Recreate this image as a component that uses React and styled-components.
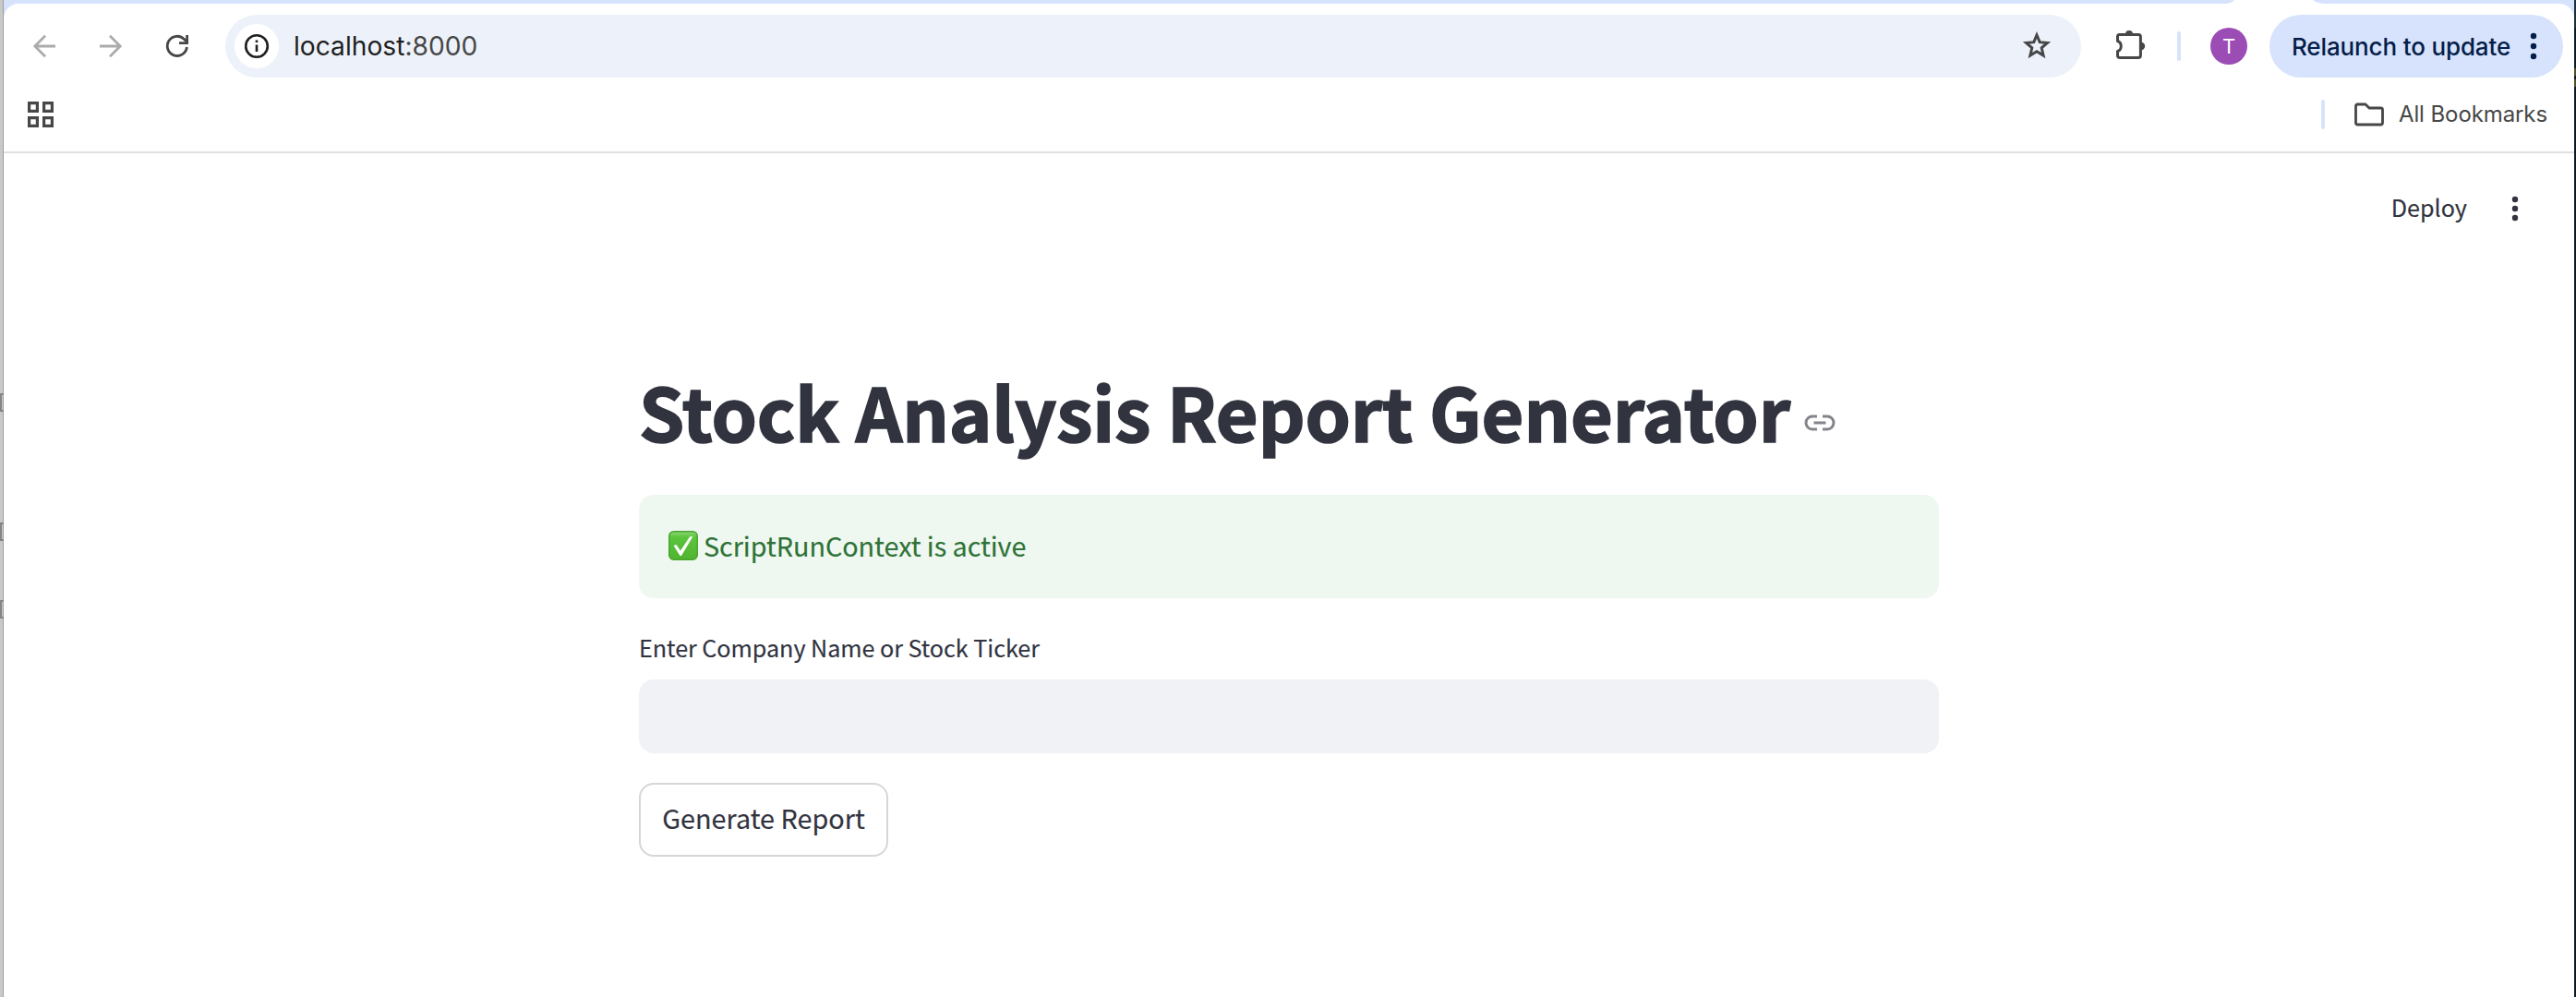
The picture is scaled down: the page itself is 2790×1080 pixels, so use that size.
import React from "react";
import styled, { createGlobalStyle } from "styled-components";

const Global = createGlobalStyle`
  * { box-sizing: border-box; }
  body { margin: 0; background: #fff; overflow: hidden; }
`;
const ui = `Inter, "Liberation Sans", sans-serif`;
const source = `"Noto Sans CJK SC", "Open Sans", sans-serif`;

const Desktop = styled.div`
  display: grid;
  grid-template-columns: 4px 1fr 2px;
  width: 2790px;
  height: 1080px;
  overflow: hidden;
`;
const LeftEdge = styled.div`
  display: flex;
  flex-direction: column;
  background: linear-gradient(90deg, #c9c9c7 0 3px, #9d9d9d 3px);
  padding-top: 426px;
`;
const Bracket = styled.div`
  flex: none;
  height: 20px;
  margin-bottom: ${(p) => p.$after}px;
  border: 2px solid #858585;
  border-right: 0;
`;
const RightEdge = styled.div`
  background: linear-gradient(#1b3039 0 30px, #0b1c24 30px 74px, #4f5128 74px 82px, #0b1c24 82px 86px, #4f5128 86px 94px, #0b1c24 94px);
`;
const Browser = styled.div`
  background: #d7e2fc;
  display: flex;
  flex-direction: column;
`;
const TabStrip = styled.div`
  height: 4px;
  flex: none;
  display: flex;
  justify-content: flex-end;
  padding-right: 271px;
`;
const Chrome = styled.div`
  flex: 1;
  background: #fff;
  border-radius: 16px 16px 0 0;
`;
const Toolbar = styled.div`
  display: flex;
  align-items: center;
  height: 92px;
  padding: 0 12px 0 24px;
`;
const IconSlot = styled.div`
  display: flex;
  align-items: center;
  justify-content: center;
  flex: none;
  width: ${(p) => p.$w}px;
  margin-left: ${(p) => p.$ml || 0}px;
  margin-top: ${(p) => p.$mt || 0}px;
`;
const AddressBar = styled.div`
  flex: none;
  display: flex;
  align-items: center;
  width: 2010px;
  height: 68px;
  margin-left: 32px;
  padding: 0 30px 0 10px;
  border-radius: 34px;
  background: #edf2fa;
`;
const SiteInfo = styled.div`
  display: grid;
  place-items: center;
  width: 48px;
  height: 48px;
  border-radius: 50%;
  background: #fff;
`;
const Url = styled.div`
  flex: 1;
  margin-left: 16px;
  font: 400 28.2px/40px ${ui};
  color: #1f1f1f;
  span { color: #474747; }
`;
const Divider = styled.div`
  width: 4px;
  height: 32px;
  border-radius: 2px;
  background: #d7e2fc;
  margin-left: ${(p) => p.$ml || 0}px;
`;
const Avatar = styled.div`
  width: 40px;
  height: 40px;
  margin-left: 32px;
  border-radius: 50%;
  background: #9c4cb5;
  color: #fff;
  font: 400 22px/41px Roboto, sans-serif;
  text-align: center;
`;
const Relaunch = styled.div`
  display: flex;
  align-items: center;
  justify-content: space-between;
  width: 318px;
  height: 68px;
  margin-left: 24px;
  padding: 0 24px;
  border-radius: 34px;
  background: #d7e2fc;
  color: #041e49;
  font: 500 26px/40px ${ui};
  letter-spacing: -0.14px;
  white-space: nowrap;
`;
const RelaunchText = styled.span` padding-top: 2px; `;
const Bookmarks = styled.div`
  display: flex;
  align-items: center;
  height: 70px;
  padding: 0 29px 12px 26px;
  border-bottom: 2px solid #e0e0e0;
`;
const BookmarkLabel = styled.div`
  margin-left: 16px;
  font: 400 24px/36px ${ui};
  letter-spacing: -0.1px;
  color: #474747;
  white-space: nowrap;
`;
const Spacer = styled.div` flex: 1; `;
const AppHeader = styled.div`
  display: flex;
  align-items: center;
  justify-content: flex-end;
  height: 120px;
  padding-right: 52px;
  color: #31333f;
`;
const Deploy = styled.div`
  margin-top: -5px;
  font: 400 25.2px/40px ${source};
  -webkit-text-stroke: 0.15px;
`;
const Main = styled.main`
  width: 1408px;
  margin: 0 auto;
  padding-top: 104px;
  color: #31333f;
  font-family: ${source};
`;
const TitleRow = styled.div`
  display: flex;
  align-items: center;
  height: 114px;
`;
const Title = styled.h1`
  margin: -4px 0 0;
  font: 700 79px/106px ${source};
  letter-spacing: -0.11px;
  -webkit-text-stroke: 1.7px;
  white-space: nowrap;
`;
const Alert = styled.div`
  display: flex;
  align-items: center;
  height: 112px;
  margin-top: 32px;
  padding: 0 32px;
  border-radius: 16px;
  background: #eef8f0;
  color: #2f7237;
  font-size: 28.8px;
  line-height: 48px;
`;
const AlertText = styled.span`
  margin: -3px 0 0 6px;
  letter-spacing: -0.06px;
  -webkit-text-stroke: 0.15px;
`;
const Label = styled.label`
  display: block;
  margin-top: 30px;
  height: 58px;
  font-size: 25.2px;
  line-height: 46px;
  letter-spacing: -0.06px;
  -webkit-text-stroke: 0.15px;
`;
const Input = styled.input`
  display: block;
  width: 100%;
  height: 80px;
  border: 0;
  border-radius: 16px;
  background: #f0f2f6;
`;
const Button = styled.button`
  display: block;
  width: 270px;
  height: 80px;
  margin-top: 32px;
  padding: 0 0 4px;
  border: 2px solid #d6d6d8;
  border-radius: 16px;
  background: #fff;
  color: #31333f;
  font: 400 28.8px/48px ${source};
  -webkit-text-stroke: 0.15px;
  white-space: nowrap;
`;

const Arrow = ({ flip }) => (
  <svg width="32" height="32" viewBox="0 0 32 32" fill="none" stroke="#ababab" strokeWidth="2.8" transform={flip ? "scale(-1 1)" : undefined}>
    <path d="M28 16H6M17 4.800L5.800 16l11.200 11.200" />
  </svg>
);
const Dots = ({ color, step }) => (
  <svg width="16" height="40" viewBox="0 0 16 40" fill={color}>
    {[-1, 0, 1].map((i) => <circle key={i} cx="8" cy={20 + i * step} r="3.2" />)}
  </svg>
);

export default function App() {
  return (
    <>
      <Global />
      <Desktop>
        <LeftEdge>
          <Bracket $after={120} />
          <Bracket $after={64} />
          <Bracket $after={0} />
        </LeftEdge>
        <Browser>
          <TabStrip>
            <svg width="106" height="4" viewBox="0 0 106 4"><path d="M0 4Q6 3.500 9 0H94Q98 3.500 106 4Z" fill="#fff" /></svg>
          </TabStrip>
          <Chrome>
            <Toolbar>
              <IconSlot $w={40}><Arrow /></IconSlot>
              <IconSlot $w={40} $ml={32}><Arrow flip /></IconSlot>
              <IconSlot $w={40} $ml={32}>
                <svg width="32" height="32" viewBox="0 0 32 32" fill="none" stroke="#474747" strokeWidth="2.800">
                  <path d="M26.400 17A10.600 10.600 0 1 1 23.600 8.600L26 11" /><path d="M26.600 4V12.600H18" />
                </svg>
              </IconSlot>
              <AddressBar>
                <SiteInfo>
                  <svg width="28" height="28" viewBox="0 0 28 28" fill="none" stroke="#1f1f1f" strokeWidth="2.6">
                    <circle cx="14" cy="14" r="11.800" /><path d="M14 12.500V20M14 7.500V10" />
                  </svg>
                </SiteInfo>
                <Url>localhost<span>:8000</span></Url>
                <svg width="36" height="36" viewBox="0 0 36 36" fill="none" stroke="#474747" strokeWidth="3">
                  <path d="M18 6L21.200 13.700 29.500 14.400 23.200 19.900 25.100 28.100 18 23.700 10.900 28.100 12.800 19.900 6.500 14.400 14.800 13.700Z" />
                </svg>
              </AddressBar>
              <IconSlot $w={40} $ml={34}>
                <svg width="40" height="40" viewBox="0 0 40 40">
                  <path d="M7.500 7.500H28Q30.400 7.500 30.400 10V30Q30.400 32.500 28 32.500H8Q5.500 32.500 5.500 30V25.500C10.500 24 10.500 16 5.500 14.500V9.500Q5.500 7.500 7.500 7.500Z" fill="none" stroke="#474747" strokeWidth="3" strokeLinejoin="round" />
                  <path d="M14 7a4 4 0 0 1 8 0ZM31 15.800a4.200 4.200 0 0 1 0 8.400Z" fill="#474747" />
                </svg>
              </IconSlot>
              <Divider $ml={30} />
              <Avatar>T</Avatar>
              <Relaunch><RelaunchText>Relaunch to update</RelaunchText><Dots color="#041e49" step={11} /></Relaunch>
            </Toolbar>
            <Bookmarks>
              <svg width="28" height="28" viewBox="0 0 28 28" fill="none" stroke="#474747" strokeWidth="3.200">
                <path d="M1.600 1.600h8.800v8.800H1.600zM17.600 1.600h8.800v8.800h-8.800zM1.600 17.600h8.800v8.800H1.600zM17.600 17.600h8.800v8.800h-8.800z" />
              </svg>
              <Spacer />
              <Divider />
              <IconSlot $w={32} $ml={32}>
                <svg width="32" height="26" viewBox="0 0 32 26" fill="none" stroke="#474747" strokeWidth="2.800" strokeLinejoin="round">
                  <path d="M3.500 2H12L16 6H28.500Q30.500 6 30.500 8V22Q30.500 24 28.500 24H3.500Q1.500 24 1.500 22V4Q1.500 2 3.500 2Z" />
                </svg>
              </IconSlot>
              <BookmarkLabel>All Bookmarks</BookmarkLabel>
            </Bookmarks>
            <AppHeader>
              <Deploy>Deploy</Deploy>
              <IconSlot $w={24} $ml={40}><Dots color="#31333f" step={10} /></IconSlot>
            </AppHeader>
            <Main>
              <TitleRow>
                <Title>Stock Analysis Report Generator</Title>
                <IconSlot $w={36} $ml={14} $mt={22}>
                  <svg width="36" height="24" viewBox="0 0 36 24" fill="none" stroke="#83848c" strokeWidth="3">
                    <path d="M15 5H10a7 7 0 0 0 0 14h5M21 5h5a7 7 0 0 1 0 14h-5M11.500 12h13" />
                  </svg>
                </IconSlot>
              </TitleRow>
              <Alert>
                <svg width="32" height="32" viewBox="0 0 32 32" style={{ marginTop: -2 }}>
                  <defs><linearGradient id="check" x2="0" y2="1"><stop stopColor="#8bd878" /><stop offset=".2" stopColor="#5cc53c" /><stop offset="1" stopColor="#50b32f" /></linearGradient></defs>
                  <rect x=".7" y=".7" width="30.600" height="30.600" rx="5" fill="url(#check)" stroke="#4aa52f" strokeWidth="1.400" />
                  <path d="M5.500 16L8.500 15 13 21.500 23 6.500 26.500 6 14 27H12.500Z" fill="#fff" />
                </svg>
                <AlertText>ScriptRunContext is active</AlertText>
              </Alert>
              <Label htmlFor="ticker">Enter Company Name or Stock Ticker</Label>
              <Input id="ticker" />
              <Button>Generate Report</Button>
            </Main>
          </Chrome>
        </Browser>
        <RightEdge />
      </Desktop>
    </>
  );
}
